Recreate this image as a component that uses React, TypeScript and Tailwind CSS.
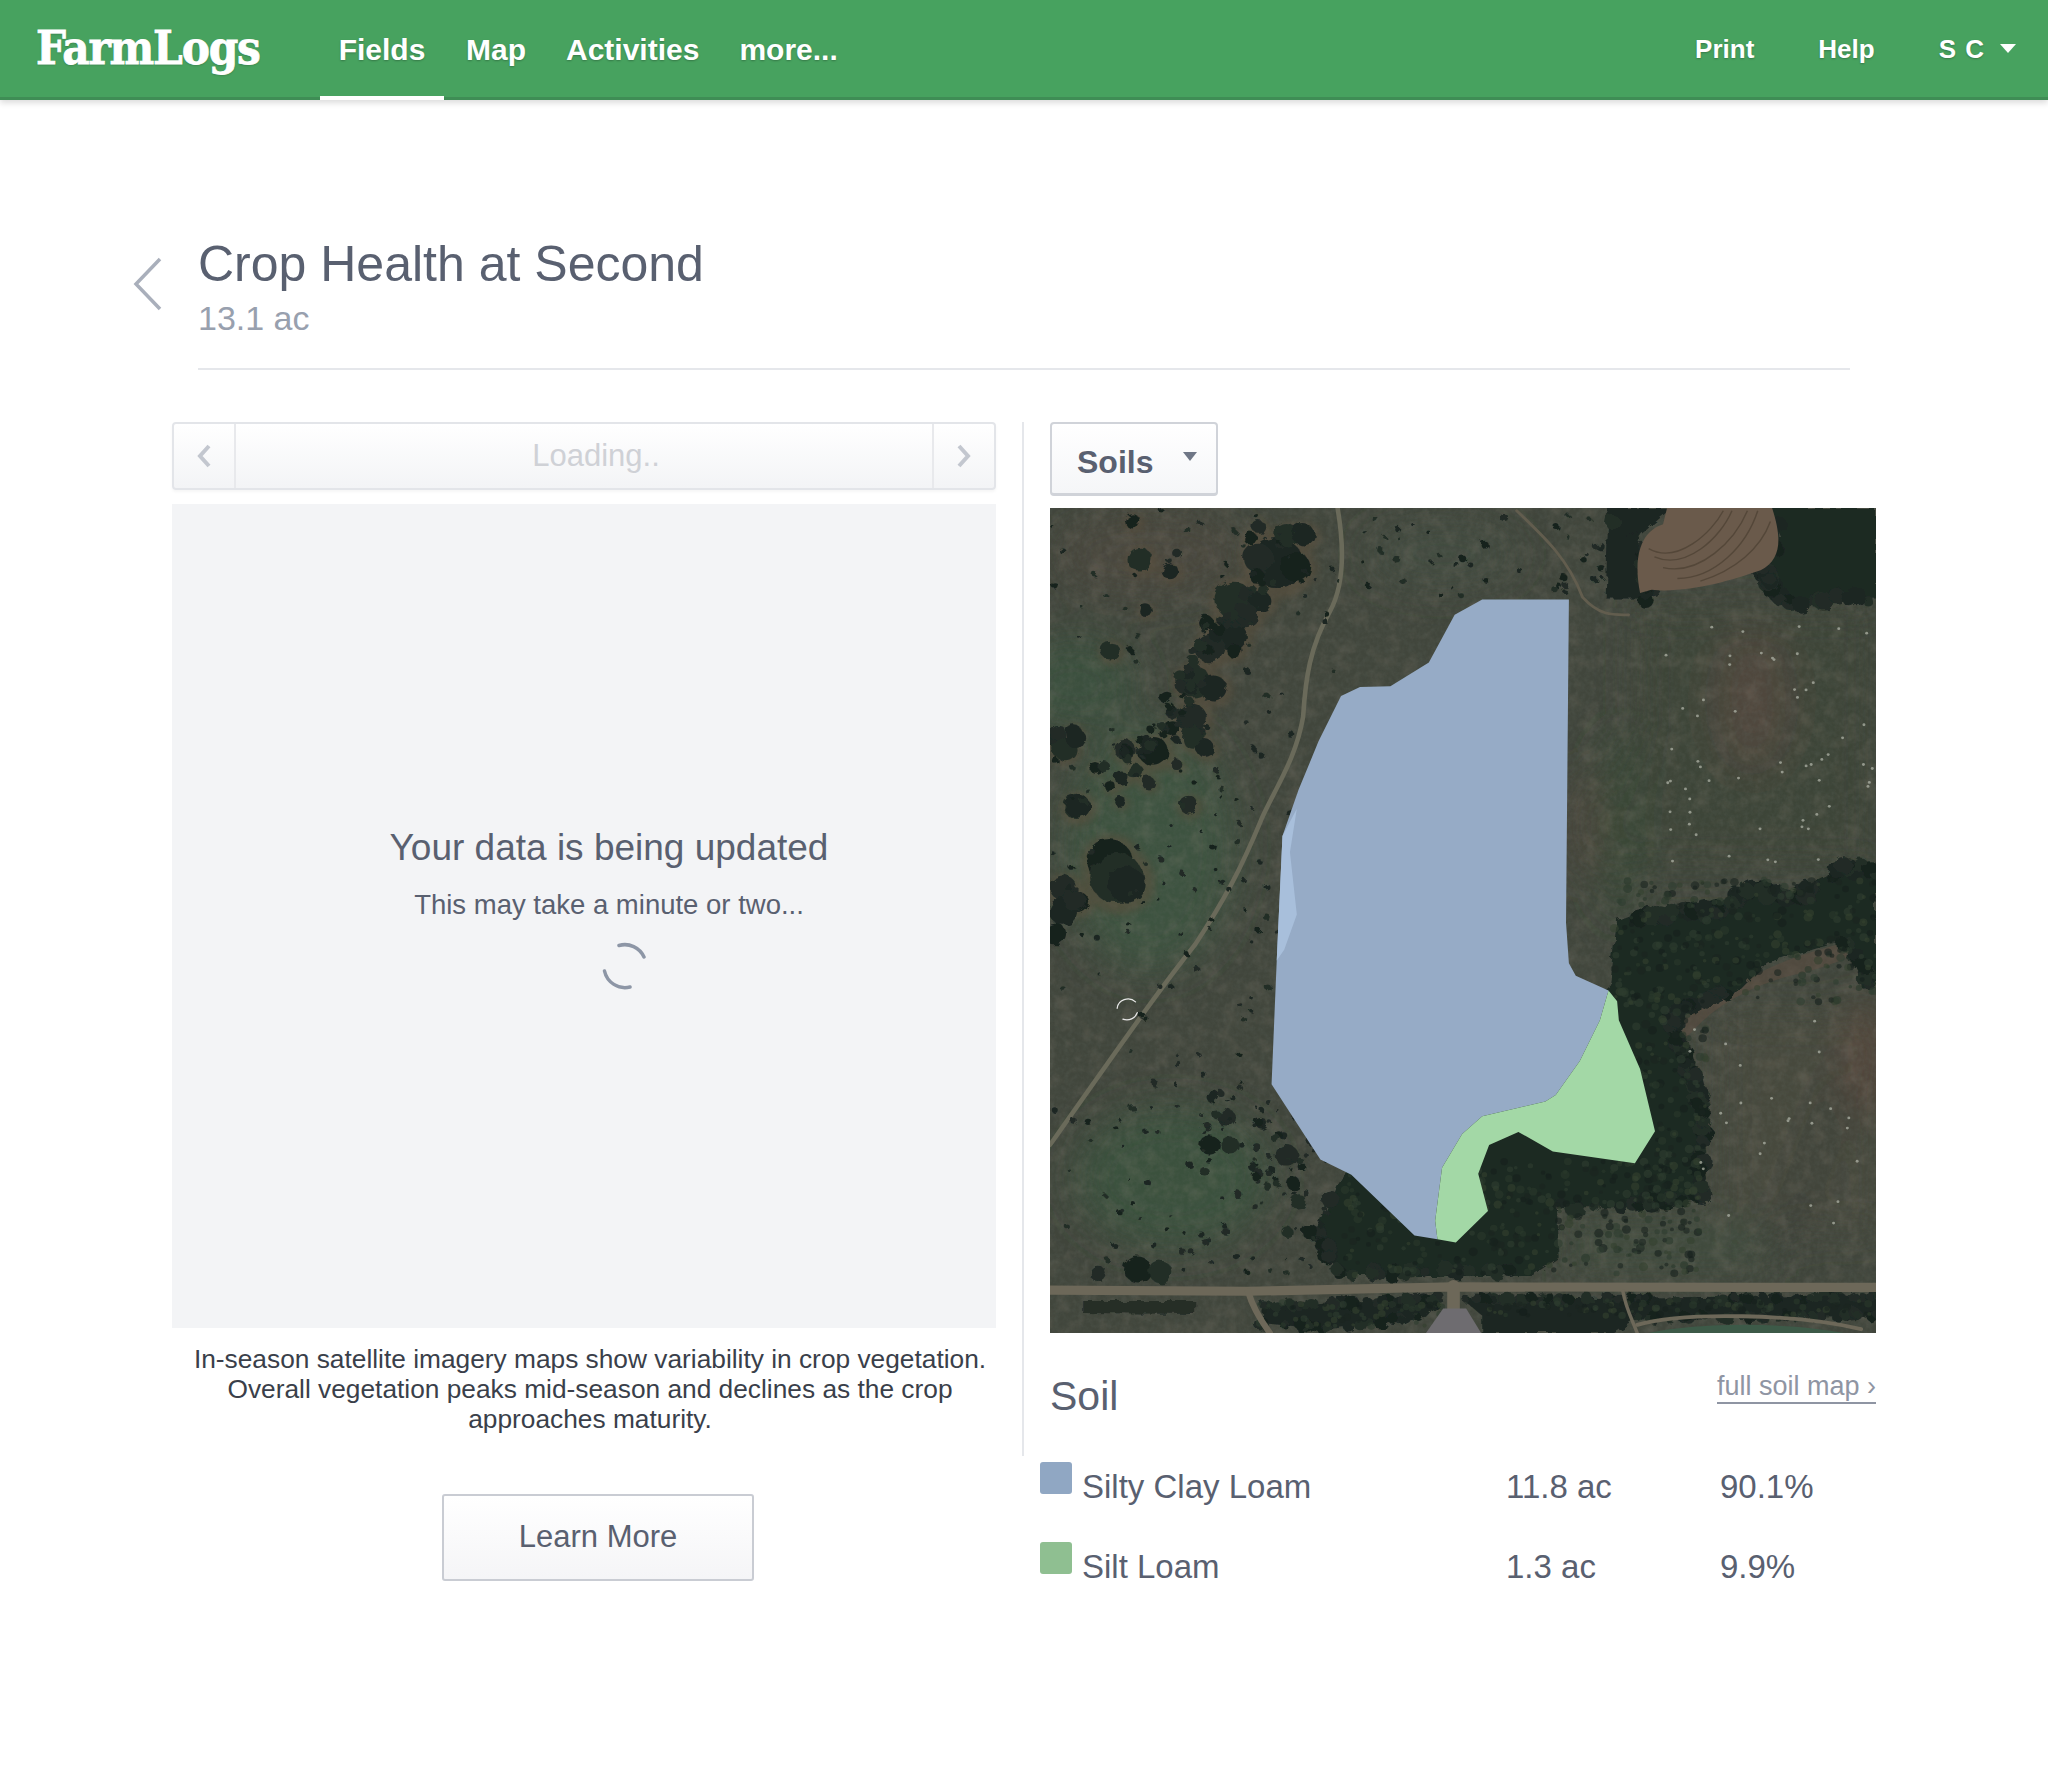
import React from "react";

type P = [number, number];
type C = { x: number; y: number; r: number; c: string };

function makeRng(seed: number) {
  let s = seed;
  return () => {
    s = (s * 16807) % 2147483647;
    return (s - 1) / 2147483646;
  };
}

const darks = ["#1c2623", "#202a26", "#19231f", "#242f28"];
const mottled = ["#2a382c", "#2f3e30", "#161f1c", "#1a2420", "#34412f"];

function along(points: P[], spread: number, count: number, rMin: number, rMax: number, seed: number, cols = darks) {
  const r = makeRng(seed);
  const out: C[] = [];
  for (let i = 0; i < count; i++) {
    const k = Math.floor(r() * (points.length - 1));
    const t = r();
    const a = points[k];
    const b = points[k + 1] || a;
    out.push({
      x: a[0] + (b[0] - a[0]) * t + (r() - 0.5) * spread * 2,
      y: a[1] + (b[1] - a[1]) * t + (r() - 0.5) * spread * 2,
      r: rMin + r() * (rMax - rMin),
      c: cols[Math.floor(r() * cols.length)],
    });
  }
  return out;
}

function scatter(x0: number, y0: number, x1: number, y1: number, count: number, rMin: number, rMax: number, seed: number, cols = darks) {
  const r = makeRng(seed);
  const a: C[] = [];
  for (let i = 0; i < count; i++) {
    a.push({ x: x0 + r() * (x1 - x0), y: y0 + r() * (y1 - y0), r: rMin + r() * (rMax - rMin), c: cols[Math.floor(r() * cols.length)] });
  }
  return a;
}

const topLeft: [number, number, number][] = [
  [680, 165, 70], [625, 150, 40], [735, 175, 40], [710, 80, 30], [760, 80, 30], [625, 55, 18], [600, 90, 18], [550, 275, 50], [630, 280, 30], [585, 320, 35],
  [470, 345, 20], [540, 335, 20], [545, 385, 40], [480, 420, 40], [555, 430, 20], [430, 520, 45], [490, 540, 35], [425, 630, 40],
  [365, 660, 22], [430, 690, 30], [465, 720, 25], [225, 725, 28], [310, 730, 40], [255, 790, 22], [215, 810, 18], [295, 825, 18],
  [180, 835, 15], [80, 895, 35], [210, 880, 15], [415, 890, 25], [180, 1060, 60], [200, 1110, 70], [230, 1130, 50], [40, 1140, 35],
  [80, 1180, 30], [40, 720, 32], [70, 670, 20], [5, 690, 20], [135, 778, 15], [270, 155, 33], [360, 190, 22], [380, 135, 12],
  [248, 40, 20], [180, 428, 25], [285, 305, 18], [380, 770, 15],
];
const clusters: C[] = topLeft.map(([x, y, r], i) => ({ x: 17 + 0.5807 * x, y: 15 + 0.615 * y, r: r * 0.66, c: darks[i % 4] }));
const moreClusters: [number, number, number][] = [
  [40, 760, 24], [60, 740, 20], [25, 800, 20], [45, 462, 20], [62, 440, 18], [30, 430, 15], [150, 465, 12], [110, 490, 10], [65, 565, 22],
  [100, 1427, 14], [170, 1420, 24], [210, 1425, 20], [300, 1100, 12], [325, 1140, 16], [295, 1190, 18], [330, 1190, 16], [385, 1150, 10],
  [430, 1210, 20], [440, 1260, 12], [450, 1295, 14], [370, 1230, 8], [505, 1290, 16], [470, 1350, 14], [430, 1350, 10],
];
const halos = clusters.filter((c) => c.r > 8);

const trees: C[] = [
  ...clusters,
  ...moreClusters.map(([x, y, r], i) => ({ x, y, r, c: darks[i % 4] })),
  ...along([[400, 120], [340, 190], [290, 265], [265, 340], [200, 450], [140, 480]], 22, 60, 6, 12, 61),
  ...scatter(20, 20, 400, 1430, 170, 2.5, 6, 11),
  ...scatter(400, 60, 520, 1430, 60, 2.5, 6, 14),
  ...scatter(560, 20, 980, 180, 40, 2.5, 7, 12),
  ...scatter(280, 1100, 500, 1430, 50, 3, 8, 16),
];

const beltPoly =
  "1005,775 1030,765 1080,762 1125,745 1172,757 1242,720 1323,733 1353,701 1398,677 1456,683 1456,899 1433,904 1428,849 1398,812 1353,825 1266,854 1219,904 1172,928 1109,941 1102,973 1144,1076 1155,1168 1160,1240 1150,1290 1090,1305 900,1305 905,1400 860,1432 520,1432 480,1350 530,1240 990,900";

const speckles: C[] = [
  ...scatter(1000, 700, 1456, 930, 300, 3, 8, 41, mottled),
  ...scatter(1010, 900, 1160, 1300, 170, 3, 8, 42, mottled),
  ...scatter(530, 1220, 1150, 1430, 380, 3, 8, 43, mottled),
  ...scatter(380, 1480, 700, 1525, 60, 3, 7, 44, mottled),
  ...scatter(780, 1476, 1456, 1505, 110, 3, 7, 45, mottled),
];
const beltEdge: C[] = [
  ...along([[1005, 775], [1080, 762], [1172, 757], [1242, 720], [1323, 733], [1398, 677], [1456, 683]], 8, 70, 9, 17, 51),
  ...along([[1219, 904], [1109, 941], [1102, 973], [1144, 1076], [1155, 1168], [1150, 1290], [900, 1305]], 7, 80, 9, 16, 52),
  ...along([[860, 1425], [520, 1425], [480, 1350]], 8, 40, 8, 14, 53),
  ...along([[1398, 812], [1430, 850], [1440, 900]], 8, 14, 8, 14, 54),
  ...along([[990, 30], [1040, 70], [1062, 180]], 8, 18, 8, 15, 55),
  ...along([[1285, 30], [1262, 140], [1300, 190], [1456, 180]], 8, 40, 9, 17, 56),
  ...along([[388, 1490], [700, 1476]], 6, 40, 6, 12, 57),
  ...along([[388, 1518], [510, 1530], [672, 1505]], 6, 24, 6, 12, 58),
  ...along([[735, 1476], [1456, 1470]], 5, 70, 6, 11, 59),
  ...along([[1040, 1510], [1456, 1504]], 5, 40, 6, 11, 60),
];

const dots = (() => {
  const r = makeRng(77);
  const a: P[] = [];
  for (let i = 0; i < 58; i++) a.push([1090 + r() * 360, 230 + r() * 440]);
  for (let i = 0; i < 26; i++) a.push([1130 + r() * 300, 960 + r() * 400]);
  return a;
})();

const blue = "770,184 921,184 916,780 921,855 933,878 990,905 975,960 940,1035 898,1098 880,1110 770,1137 735,1170 700,1232 688,1330 692,1364 652,1357 542,1245 488,1217 403,1078 412,850 422,620 450,535 485,445 524,362 557,345 610,344 677,300 722,212";
const green = "990,905 1005,925 1008,960 1045,1050 1071,1165 1036,1224 893,1202 833,1166 782,1190 763,1243 780,1312 724,1370 692,1364 688,1330 700,1232 735,1170 770,1137 880,1110 898,1098 940,1035 975,960";
const lightBlue = "422,620 447,570 435,650 447,765 425,830 412,850";

function SatelliteMap() {
  return (
    <svg viewBox="17 15 1439 1522" preserveAspectRatio="none" className="block w-[826px] h-[825px]">
      <defs>
        <filter id="soft" x="-30%" y="-30%" width="160%" height="160%">
          <feGaussianBlur stdDeviation="34" />
        </filter>
        <filter id="haloBlur" x="-10%" y="-10%" width="120%" height="120%">
          <feGaussianBlur stdDeviation="7" />
        </filter>
        <filter id="bumpy" x="-5%" y="-5%" width="110%" height="110%">
          <feTurbulence type="fractalNoise" baseFrequency="0.05" numOctaves="3" seed="8" result="n" />
          <feDisplacementMap in="SourceGraphic" in2="n" scale="14" />
          <feGaussianBlur stdDeviation="1.2" />
        </filter>
        <filter id="grain" x="0" y="0" width="100%" height="100%">
          <feTurbulence type="fractalNoise" baseFrequency="0.12 0.11" numOctaves="4" seed="4" />
          <feColorMatrix values="0 0 0 0 0.12  0 0 0 0 0.14  0 0 0 0 0.12  0 0 0 1.5 -0.5" />
        </filter>
        <filter id="grainBrown" x="0" y="0" width="100%" height="100%">
          <feTurbulence type="fractalNoise" baseFrequency="0.035" numOctaves="4" seed="9" />
          <feColorMatrix values="0 0 0 0 0.42  0 0 0 0 0.33  0 0 0 0 0.27  0 0 0 2.2 -1" />
        </filter>
      </defs>
      <rect x="17" y="15" width="1439" height="1522" fill="#41463c" />
      <g filter="url(#soft)">
        <ellipse cx="190" cy="640" rx="150" ry="230" fill="#3c523f" />
        <ellipse cx="60" cy="340" rx="110" ry="90" fill="#3a4f3e" />
        <ellipse cx="230" cy="1250" rx="170" ry="130" fill="#3b513e" />
        <ellipse cx="190" cy="100" rx="170" ry="80" fill="#4a463c" />
        <ellipse cx="700" cy="100" rx="130" ry="60" fill="#424c41" />
        <ellipse cx="1010" cy="600" rx="26" ry="180" fill="#344836" />
        <rect x="1040" y="200" width="420" height="480" fill="#3c4437" />
        <ellipse cx="1240" cy="370" rx="60" ry="130" fill="#51473c" />
        <ellipse cx="950" cy="600" rx="24" ry="100" fill="#50463c" />
        <rect x="1180" y="950" width="290" height="400" fill="#46483e" />
        <rect x="920" y="1330" width="340" height="90" fill="#414c3c" />
        <line x1="1410" y1="1040" x2="1290" y2="1380" stroke="#363935" strokeWidth="30" />
        <ellipse cx="1440" cy="1030" rx="36" ry="110" fill="#59493d" />
      </g>
      <rect x="17" y="15" width="1439" height="1522" filter="url(#grainBrown)" opacity="0.16" />
      <rect x="17" y="15" width="1439" height="1522" filter="url(#grain)" opacity="0.28" />
      <path d="M1110 950 C1160 920 1200 900 1240 880 C1290 850 1350 830 1410 815 C1430 830 1420 850 1300 880 C1200 910 1150 960 1120 1000 Z" fill="#5f4d42" opacity="0.5" />

      <g filter="url(#bumpy)">
        <path d="M990 15 L1100 15 L1040 70 L1062 182 L985 182 Z" fill="#1c2623" />
        <path d="M1272 15 L1456 15 L1456 182 L1300 196 L1255 140 L1292 70 Z" fill="#1e2924" />
        <polygon points={beltPoly} fill="#1d2924" />
        <path d="M388 1488 L700 1474 L672 1507 L510 1531 L388 1519 Z" fill="#1c2623" />
        <path d="M735 1474 L1456 1468 L1456 1505 L1040 1512 L1000 1537 L770 1537 L770 1505 Z" fill="#1d2723" />
        <path d="M75 1478 L270 1478 L270 1502 L75 1500 Z" fill="#252d28" />
        {beltEdge.map((t, i) => (
          <circle key={i} cx={t.x} cy={t.y} r={t.r} fill={t.c} />
        ))}
      </g>
      {speckles.map((t, i) => (
        <circle key={i} cx={t.x} cy={t.y} r={t.r} fill={t.c} opacity="0.6" />
      ))}

      <path d="M1045 172 C1030 90 1055 55 1085 45 L1092 15 L1275 15 C1292 70 1292 110 1255 130 C1200 150 1130 172 1065 166 Z" fill="#6a5a4b" />
      <g fill="none" stroke="#544739" strokeWidth="2.5">
        <path d="M1060 90 C1110 120 1170 60 1190 20" />
        <path d="M1070 105 C1125 130 1185 70 1205 20" />
        <path d="M1085 125 C1150 140 1210 75 1232 20" />
        <path d="M1110 145 C1175 145 1230 85 1250 20" />
        <path d="M1150 150 C1210 130 1255 90 1272 40" />
      </g>

      <g fill="none" strokeLinecap="round" strokeLinejoin="round">
        <path d="M518 15 C530 90 528 160 505 205 C470 270 462 330 458 400 C445 480 410 530 385 590 C350 680 320 740 270 820 C210 900 150 990 17 1190" stroke="#6a6a5a" strokeWidth="8" />
        <path d="M830 20 C880 70 920 110 945 180 C975 215 1000 212 1025 212" stroke="#625d4e" strokeWidth="5" />
        <path d="M17 1458 L360 1460 L720 1452 L1456 1453" stroke="#6d6859" strokeWidth="17" />
        <path d="M362 1460 C370 1490 385 1515 400 1537" stroke="#6d6859" strokeWidth="11" />
        <path d="M720 1450 L720 1495" stroke="#6d6859" strokeWidth="22" />
        <path d="M1015 1460 C1020 1490 1030 1510 1040 1537" stroke="#6d6859" strokeWidth="6" />
        <path d="M1040 1522 C1120 1497 1320 1502 1430 1530" stroke="#6d6859" strokeWidth="7" />
      </g>
      <polygon points="702,1492 742,1492 768,1537 672,1537" fill="#6e6c70" />
      <path d="M1060 1537 C1150 1517 1300 1517 1400 1537 Z" fill="#3d5a48" />

      <g fill="#5a4f3c" opacity="0.6" filter="url(#haloBlur)">
        {halos.map((t, i) => (
          <circle key={i} cx={t.x + 3} cy={t.y + 4} r={t.r * 1.35} />
        ))}
      </g>
      <g filter="url(#bumpy)">
        {trees.map((t, i) => (
          <circle key={i} cx={t.x} cy={t.y} r={t.r} fill={t.c} />
        ))}
      </g>
      <g fill="#aeb2a6" opacity="0.75">
        {dots.map((d, i) => (
          <circle key={i} cx={d[0]} cy={d[1]} r="2.6" />
        ))}
      </g>
      <polygon points={blue} fill="#96abc6" />
      <polygon points={lightBlue} fill="#a8bfdb" />
      <polygon points={green} fill="#a3d8a6" />
      <g fill="none" stroke="#e8e8e8" strokeWidth="2.2" strokeLinecap="round">
        <path d="M134 938 A19 19 0 0 1 166 926" />
        <path d="M169 946 A19 19 0 0 1 144 958" />
      </g>
    </svg>
  );
}

function Row({ color, name, ac, pct }: { color: string; name: string; ac: string; pct: string }) {
  return (
    <div className="flex h-[80px] items-start">
      <span className="h-[32px] w-[32px] shrink-0 rounded-[3px]" style={{ backgroundColor: color }} />
      <span className="ml-[10px] w-[424px] pt-[6px] text-[33px] leading-[38px]">{name}</span>
      <span className="w-[214px] pt-[6px] text-[33px] leading-[38px]">{ac}</span>
      <span className="pt-[6px] text-[33px] leading-[38px]">{pct}</span>
    </div>
  );
}

export default function App() {
  return (
    <div className="min-h-[1778px] bg-white text-[#596070] font-['Liberation_Sans',Arial,sans-serif]">
      <header className="relative flex h-[100px] items-stretch border-b-[3px] border-[#3f8d55] bg-[#47a25f] text-white shadow-[0_3px_6px_rgba(0,0,0,0.14)] [text-shadow:0_1px_2px_rgba(0,0,0,0.25)]">
        <div className="ml-[36px] w-[284px] pt-[18px] font-['DejaVu_Serif_Condensed','DejaVu_Serif',serif] text-[47px] font-bold leading-[60px] tracking-[-1.2px] [-webkit-text-stroke:0.8px_white]">FarmLogs</div>
        <nav className="flex text-[30px] font-bold leading-[100px]">
          <a className="h-[100px] w-[124px] border-b-[4px] border-white text-center">Fields</a>
          <a className="h-[100px] pl-[22px] pr-[20px]">Map</a>
          <a className="h-[100px] pl-[20px] pr-[20px]">Activities</a>
          <a className="h-[100px] pl-[20px] pr-[20px]">more...</a>
        </nav>
        <div className="ml-auto flex text-[26px] font-bold leading-[98px]">
          <a className="mr-[64px]">Print</a>
          <a className="mr-[64px]">Help</a>
          <a className="flex items-center tracking-[1px]">
            S C
            <svg width="16" height="9" viewBox="0 0 16 9" className="ml-[15px] mr-[32px]">
              <path d="M0 0H16L8 9Z" fill="#fff" />
            </svg>
          </a>
        </div>
      </header>

      <div className="relative ml-[198px] mr-[198px] mt-[134px] h-[136px] border-b-2 border-[#e5e7eb]">
        <svg width="30" height="54" viewBox="0 0 30 54" className="absolute left-[-66px] top-[23px]">
          <path d="M28 2L4 27L28 52" fill="none" stroke="#a9afbb" strokeWidth="3.5" />
        </svg>
        <h1 className="text-[50px] font-normal leading-[60px]">Crop Health at Second</h1>
        <p className="mt-[3px] text-[34px] leading-[42px] text-[#98a0ae]">13.1 ac</p>
      </div>

      <main className="ml-[172px] mt-[52px] flex items-start">
        <section className="w-[824px]">
          <div className="flex h-[68px] rounded-[4px] border-2 border-[#e3e5e9] bg-gradient-to-b from-white to-[#f3f4f6] shadow-[0_2px_3px_rgba(0,0,0,0.04)]">
            <div className="flex w-[62px] items-center justify-center border-r-2 border-[#e8e9ec]">
              <svg width="16" height="26" viewBox="0 0 16 26"><path d="M13 3L4 13L13 23" fill="none" stroke="#c3c7cf" strokeWidth="4" /></svg>
            </div>
            <div className="flex-1 pl-[24px] text-center text-[31px] leading-[64px] text-[#cfd1d6]">Loading..</div>
            <div className="flex w-[62px] items-center justify-center border-l-2 border-[#e8e9ec]">
              <svg width="16" height="26" viewBox="0 0 16 26"><path d="M3 3L12 13L3 23" fill="none" stroke="#c3c7cf" strokeWidth="4" /></svg>
            </div>
          </div>
          <div className="mt-[14px] flex h-[824px] flex-col items-center bg-[#f3f4f6] pl-[50px] pt-[322px]">
            <h2 className="text-[37px] font-normal leading-[44px]">Your data is being updated</h2>
            <p className="mt-[18px] text-[27.5px] leading-[34px]">This may take a minute or two...</p>
            <svg width="48" height="48" viewBox="0 0 48 48" className="ml-[32px] mt-[20px]">
              <g fill="none" stroke="#8d96a6" strokeWidth="3.5" strokeLinecap="round">
                <path d="M18 3.5A21 21 0 0 1 43 15" />
                <path d="M3.5 29A21 21 0 0 0 29 45" />
              </g>
            </svg>
          </div>
          <p className="ml-[12px] mt-[16px] text-center text-[26.3px] leading-[30px] text-[#3a3f4a]">
            In-season satellite imagery maps show variability in crop vegetation.
            <br />
            Overall vegetation peaks mid-season and declines as the crop
            <br />
            approaches maturity.
          </p>
          <button className="ml-[270px] mt-[60px] block h-[87px] w-[312px] rounded-[3px] border-2 border-[#c9ccd3] bg-gradient-to-b from-white to-[#f5f5f7] pb-[1px] text-[31px] text-[#596070]">Learn More</button>
        </section>

        <section className="ml-[26px] w-[854px]">
          <div className="h-[1034px] border-l-2 border-[#e5e7eb] pl-[26px]">
            <button className="flex h-[74px] w-[168px] rounded-[4px] border-2 border-b-[3px] border-[#d0d3d9] bg-gradient-to-b from-white to-[#f5f6f8] pl-[25px] text-[32px] font-bold leading-[76px] text-[#596070]">
              Soils
              <svg width="14" height="9" viewBox="0 0 14 9" className="ml-[30px] mt-[28px]"><path d="M0 0H14L7 9Z" fill="#6f7786" /></svg>
            </button>
            <div className="mt-[12px]"><SatelliteMap /></div>
            <div className="mt-[39px] flex w-[826px] items-start justify-between">
              <h3 className="text-[41px] font-normal leading-[48px]">Soil</h3>
              <a className="mt-[-2px] border-b-2 border-[#8f95a3] text-[27px] leading-[32px] text-[#8f95a3]">full soil map ›</a>
            </div>
          </div>
          <div className="ml-[18px] mt-[6px]">
            <Row color="#90a7c3" name="Silty Clay Loam" ac="11.8 ac" pct="90.1%" />
            <Row color="#8fbf91" name="Silt Loam" ac="1.3 ac" pct="9.9%" />
          </div>
        </section>
      </main>
    </div>
  );
}
